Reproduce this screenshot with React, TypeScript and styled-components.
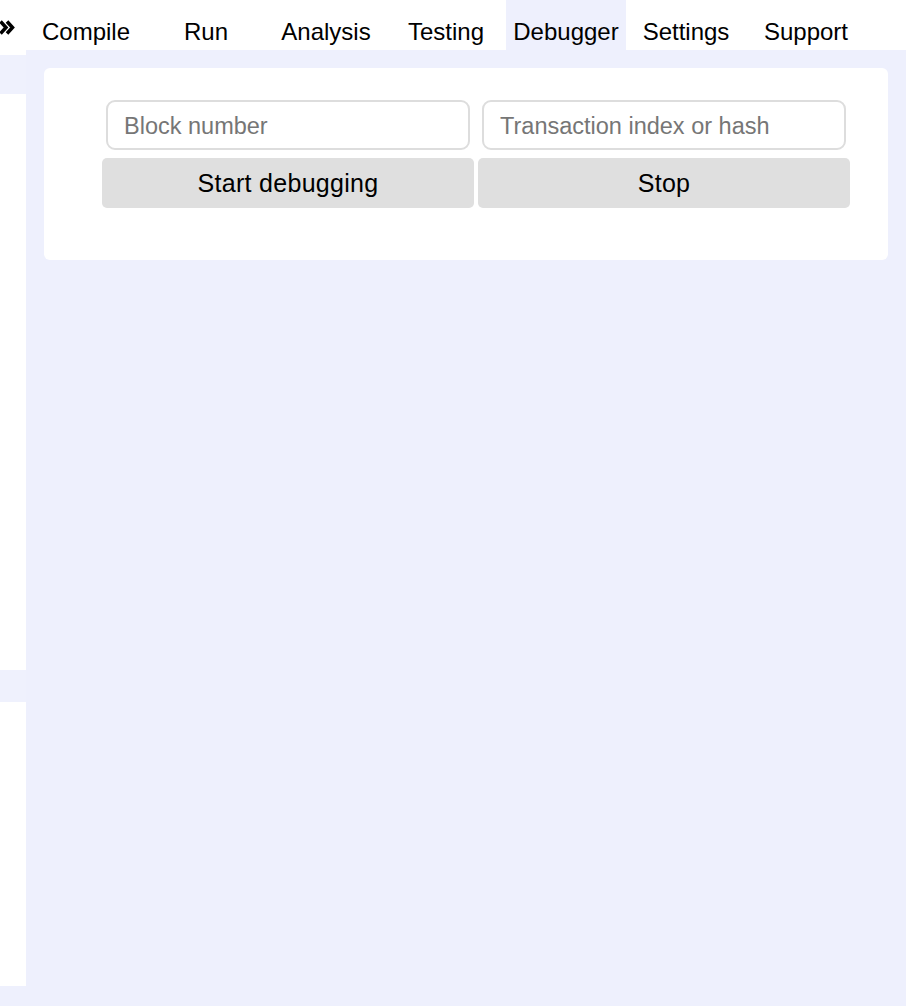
import React from "react";
import styled, { createGlobalStyle } from "styled-components";

const GlobalStyle = createGlobalStyle`
  html, body {
    margin: 0;
    padding: 0;
    background: #eef0fd;
    font-family: "Liberation Sans", Arial, Helvetica, sans-serif;
  }
  * { box-sizing: border-box; }
`;

const Page = styled.div`
  display: flex;
  width: 906px;
  height: 1006px;
  background: #eef0fd;
  overflow: hidden;
`;

const SideColumn = styled.div`
  width: 26px;
  flex: none;
  display: flex;
  flex-direction: column;
`;

const SideBlock = styled.div<{ $h: number; $tone: "white" | "blue" }>`
  height: ${(p) => p.$h}px;
  flex: none;
  background: ${(p) => (p.$tone === "white" ? "#ffffff" : "#eff1fd")};
`;

const SideHeader = styled(SideBlock)`
  padding-top: 20px;
  overflow: hidden;
`;

const Main = styled.div`
  flex: 1;
  display: flex;
  flex-direction: column;
  min-width: 0;
`;

const TabBar = styled.nav`
  height: 50px;
  flex: none;
  display: flex;
  background: #ffffff;
`;

const Tab = styled.div<{ $active?: boolean }>`
  width: 120px;
  height: 50px;
  padding-top: 20px;
  line-height: 24px;
  font-size: 24px;
  text-align: center;
  color: #000;
  white-space: nowrap;
  background: ${(p) => (p.$active ? "#eef0fd" : "transparent")};
`;

const Card = styled.section`
  margin: 18px;
  background: #ffffff;
  border-radius: 6px;
  padding: 32px 36px 52px 56px;
`;

const FormGrid = styled.div`
  display: grid;
  grid-template-columns: 376px 376px;
  row-gap: 8px;
`;

const Field = styled.input`
  margin: 0 6px;
  height: 50px;
  border: 2px solid #dddddd;
  border-radius: 9px;
  padding: 2px 16px 0;
  font-family: "Liberation Sans", Arial, Helvetica, sans-serif;
  font-size: 23.5px;
  color: #000;
  background: #fff;
  outline: none;
  &::placeholder {
    color: #767676;
  }
`;

const ActionButton = styled.button`
  margin: 0 2px;
  height: 50px;
  border: none;
  border-radius: 5px;
  background: #dfdfdf;
  color: #000;
  font-family: "Liberation Sans", Arial, Helvetica, sans-serif;
  font-size: 25px;
  letter-spacing: 0.3px;
  cursor: pointer;
`;

const tabs = ["Compile", "Run", "Analysis", "Testing", "Debugger", "Settings", "Support"];

export default function App() {
  return (
    <>
      <GlobalStyle />
      <Page>
        <SideColumn>
          <SideHeader $h={55} $tone="white">
            <svg width="15" height="15" viewBox="0 0 15 15" style={{ display: "block" }}>
              <polyline points="0.5,1.5 6,7.5 0.5,13.5" fill="none" stroke="#000" strokeWidth="3.5" strokeLinejoin="miter" />
              <polyline points="7,1.5 12.5,7.5 7,13.5" fill="none" stroke="#000" strokeWidth="3.5" strokeLinejoin="miter" />
            </svg>
          </SideHeader>
          <SideBlock $h={39} $tone="blue" />
          <SideBlock $h={576} $tone="white" />
          <SideBlock $h={32} $tone="blue" />
          <SideBlock $h={284} $tone="white" />
        </SideColumn>
        <Main>
          <TabBar>
            {tabs.map((t) => (
              <Tab key={t} $active={t === "Debugger"}>
                {t}
              </Tab>
            ))}
          </TabBar>
          <Card>
            <FormGrid>
              <Field placeholder="Block number" />
              <Field placeholder="Transaction index or hash" />
              <ActionButton>Start debugging</ActionButton>
              <ActionButton>Stop</ActionButton>
            </FormGrid>
          </Card>
        </Main>
      </Page>
    </>
  );
}
